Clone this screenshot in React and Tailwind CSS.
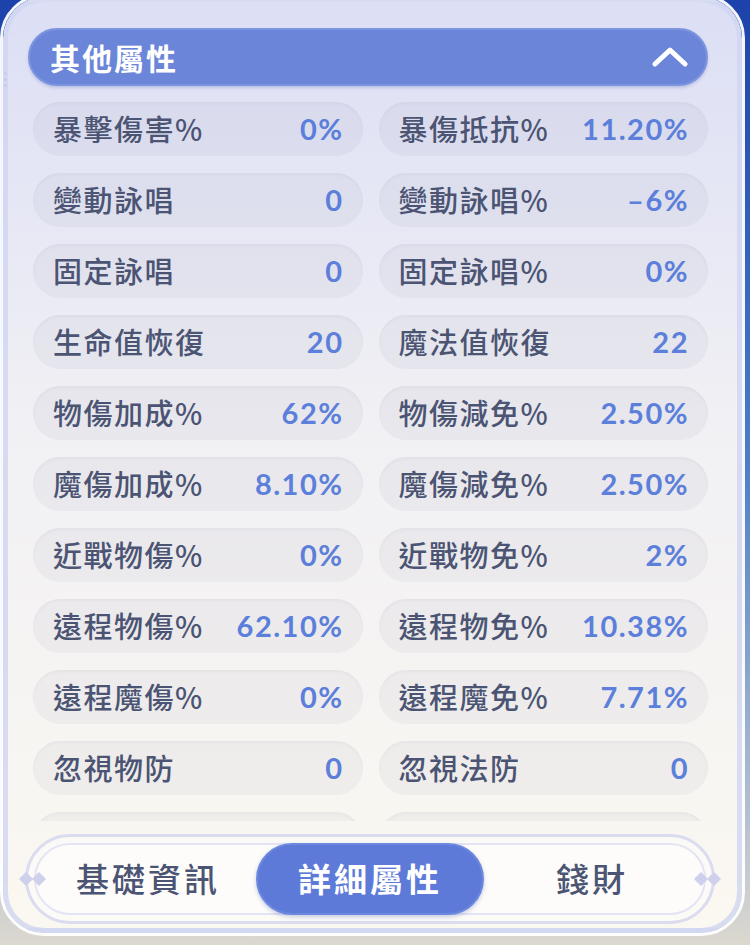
import React from "react";

const rows = [
  ["暴擊傷害%", "0%", "暴傷抵抗%", "11.20%"],
  ["變動詠唱", "0", "變動詠唱%", "–6%"],
  ["固定詠唱", "0", "固定詠唱%", "0%"],
  ["生命值恢復", "20", "魔法值恢復", "22"],
  ["物傷加成%", "62%", "物傷減免%", "2.50%"],
  ["魔傷加成%", "8.10%", "魔傷減免%", "2.50%"],
  ["近戰物傷%", "0%", "近戰物免%", "2%"],
  ["遠程物傷%", "62.10%", "遠程物免%", "10.38%"],
  ["遠程魔傷%", "0%", "遠程魔免%", "7.71%"],
  ["忽視物防", "0", "忽視法防", "0"],
  ["", "", "", ""],
];

const cjk = "font-['Noto_Sans_CJK_TC','Noto_Sans_CJK_SC',sans-serif]";

const StatPill = ({ label, value }) => (
  <div className="h-[54px] rounded-full bg-[#5c5c80]/[0.055] shadow-[inset_0_2px_3px_rgba(90,90,130,0.05)] flex items-center justify-between pl-[20px] pr-[19px]">
    <span className={`${cjk} text-[29px] font-medium tracking-[1.5px] text-[#4b5473]`}>
      {label}
    </span>
    <span className="font-['Lato',sans-serif] text-[29px] font-bold tracking-[1.5px] text-[#5b7fda]">
      {value}
    </span>
  </div>
);

const Diamond = ({ className }) => (
  <div className={`absolute w-[10px] h-[10px] rotate-45 bg-[#cfd0ec] ${className}`} />
);

const Dots = ({ className, color }) => (
  <div className={`absolute flex flex-col gap-[3px] ${className}`}>
    <div className={`w-[3px] h-[3px] rounded-full ${color}`} />
    <div className={`w-[3px] h-[3px] rounded-full ${color}`} />
    <div className={`w-[3px] h-[3px] rounded-full ${color}`} />
  </div>
);

export default function App() {
  return (
    <div className="w-[750px] h-[945px] overflow-hidden bg-linear-to-b from-[#1d42ab] via-[#4f7fc6] via-50% to-[#dcd8cf]">
      <div className="w-[745px] h-[942px] -mt-[6px] rounded-[44px] border-[3px] border-white/95 overflow-hidden">
        <div className="relative h-full rounded-[41px] border-[5px] border-[#d0d4f1]/80 bg-linear-to-b from-[#dcdff5] via-[#f1f0f4] via-45% to-[#fbf8f1] pl-[20px] pr-[29px] pt-[26px]">
          <Dots className="-left-[4px] top-[70px]" color="bg-[#c6cbe9]" />
          <Dots className="-left-[4px] top-[460px]" color="bg-[#d6d8ec]" />
          <Dots className="-right-[4px] top-[460px]" color="bg-[#d6d8ec]" />
          <Dots className="-left-[4px] top-[866px]" color="bg-[#d6d8ec]" />
          <Dots className="-right-[4px] top-[866px]" color="bg-[#d6d8ec]" />

          {/* header */}
          <div className="h-[58px] rounded-full bg-[#6b86d9] border-2 border-[#7d95e0] shadow-[0_2px_3px_rgba(80,100,180,0.25)] flex items-center justify-between pl-[20px] pr-[18px]">
            <span className={`${cjk} text-[30px] font-bold tracking-[2px] text-white`}>其他屬性</span>
            <svg width="36" height="22" viewBox="0 0 36 22">
              <path d="M3 18 L18 4 L33 18" fill="none" stroke="white" strokeWidth="5" strokeLinecap="round" strokeLinejoin="round" />
            </svg>
          </div>

          {/* list */}
          <div className="mt-[16px] ml-[5px] h-[719px] overflow-hidden grid grid-cols-2 gap-x-[16px] gap-y-[17px] content-start">
            {rows.map((r, i) => (
              <React.Fragment key={i}>
                <StatPill label={r[0]} value={r[1]} />
                <StatPill label={r[2]} value={r[3]} />
              </React.Fragment>
            ))}
          </div>

          {/* tabs */}
          <div className="relative mt-[13px] -ml-[3px] mr-[-7px] h-[90px] rounded-full border-[3px] border-[#dcdcf1] bg-white/40 p-[6px]">
            <Diamond className="left-[-7px] top-[37px]" />
            <Diamond className="left-[6px] top-[37px]" />
            <Diamond className="right-[-7px] top-[37px]" />
            <Diamond className="right-[6px] top-[37px]" />
            <div className="h-full rounded-full border-2 border-[#e4e4f4] bg-[#fdfcfa] flex items-center px-[4px]">
              <div className="flex-1 flex justify-center">
                <span className={`${cjk} text-[33px] font-medium tracking-[3px] text-[#4b5473]`}>基礎資訊</span>
              </div>
              <div className="w-[228px] h-[72px] rounded-full bg-[#5d7ad8] border-2 border-[#6c88df] shadow-[0_2px_4px_rgba(70,90,180,0.3)] flex items-center justify-center">
                <span className={`${cjk} text-[33px] font-bold tracking-[3px] text-white`}>詳細屬性</span>
              </div>
              <div className="flex-1 flex justify-center">
                <span className={`${cjk} text-[33px] font-medium tracking-[3px] text-[#4b5473]`}>錢財</span>
              </div>
            </div>
          </div>
        </div>
      </div>
    </div>
  );
}
